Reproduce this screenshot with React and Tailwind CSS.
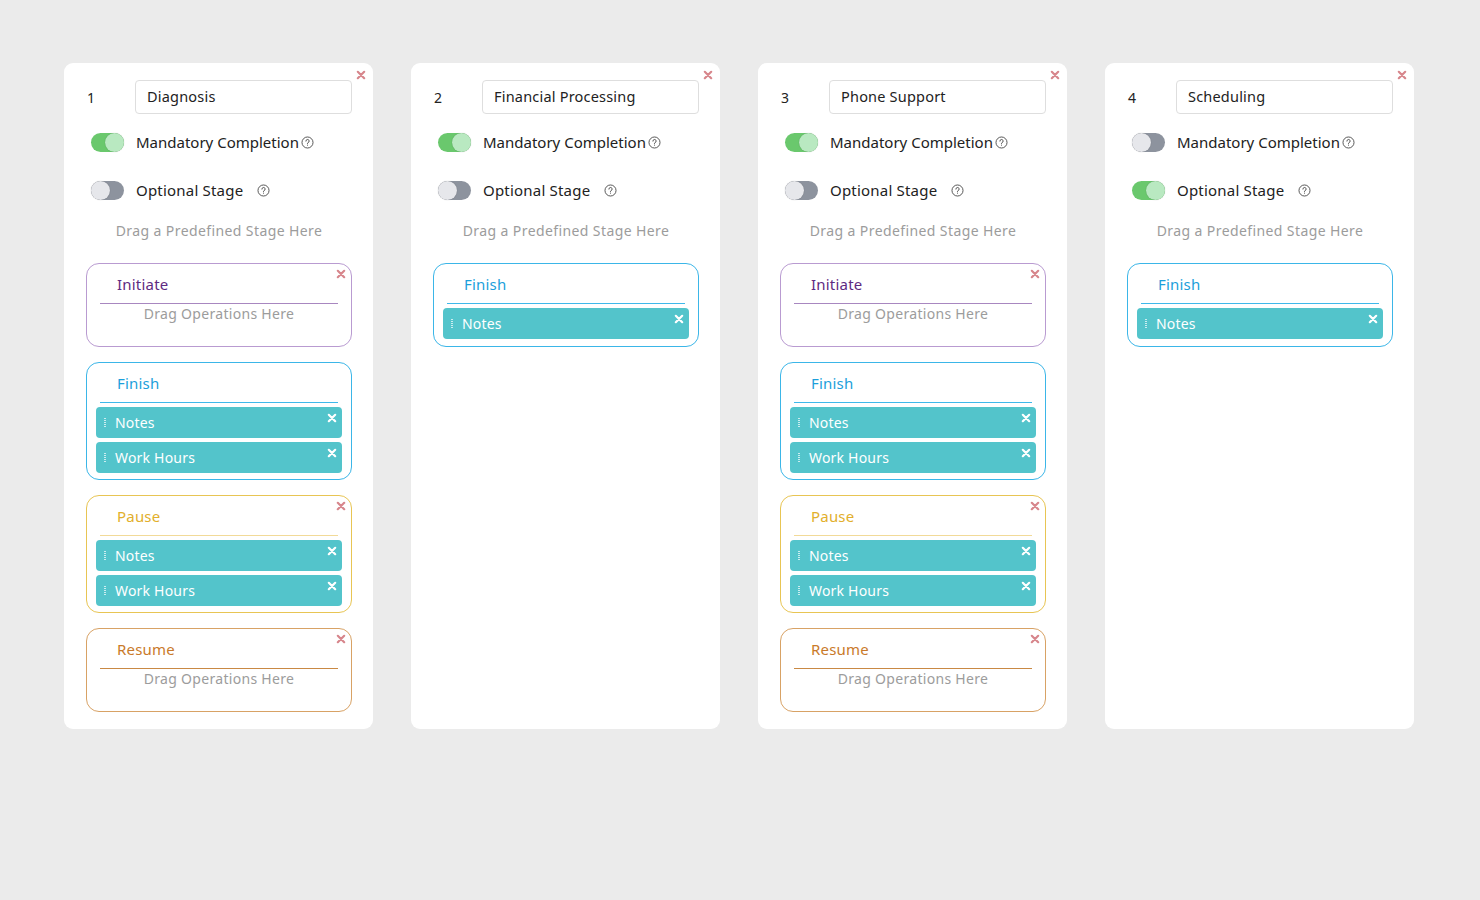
import { useState } from "react";

const STAGE_STYLES = {
  Initiate: { box: "border-[#b99bd1]", title: "text-[#5e2a82]", line: "bg-[#a887c0]" },
  Finish: { box: "border-[#3bb6e8]", title: "text-[#1c9fdb]", line: "bg-[#3fb8ea]" },
  Pause: { box: "border-[#e8c553]", title: "text-[#e2af2c]", line: "bg-[#f2da98]" },
  Resume: { box: "border-[#d8a265]", title: "text-[#c97a2a]", line: "bg-[#c98944]" }
};

const columns = [
  {
    id: 1,
    name: "Diagnosis",
    mandatory: true,
    optional: false,
    stages: [
      { name: "Initiate", ops: [], closable: true },
      { name: "Finish", ops: ["Notes", "Work Hours"] },
      { name: "Pause", ops: ["Notes", "Work Hours"], closable: true },
      { name: "Resume", ops: [], closable: true }
    ]
  },
  {
    id: 2,
    name: "Financial Processing",
    mandatory: true,
    optional: false,
    stages: [{ name: "Finish", ops: ["Notes"] }]
  },
  {
    id: 3,
    name: "Phone Support",
    mandatory: true,
    optional: false,
    stages: [
      { name: "Initiate", ops: [], closable: true },
      { name: "Finish", ops: ["Notes", "Work Hours"] },
      { name: "Pause", ops: ["Notes", "Work Hours"], closable: true },
      { name: "Resume", ops: [], closable: true }
    ]
  },
  {
    id: 4,
    name: "Scheduling",
    mandatory: false,
    optional: true,
    stages: [{ name: "Finish", ops: ["Notes"] }]
  }
];

function CloseX({ className }) {
  return (
    <svg viewBox="0 0 10 10" className={className} fill="none" stroke="currentColor" strokeWidth="2.2" strokeLinecap="round">
      <path d="M1.8 1.8 L8.2 8.2 M8.2 1.8 L1.8 8.2" />
    </svg>
  );
}

function HelpIcon() {
  return (
    <svg viewBox="0 0 16 16" className="h-[13px] w-[13px] text-[#444]" fill="none" stroke="currentColor" strokeWidth="1.1">
      <circle cx="8" cy="8" r="6.8" />
      <path d="M6 6.3a2 2 0 1 1 2.6 1.9c-.4.2-.6.5-.6.9v.7" strokeLinecap="round" />
      <circle cx="8" cy="11.6" r="0.6" fill="currentColor" stroke="none" />
    </svg>
  );
}

function Toggle({ on }) {
  return (
    <div className={`relative h-[19px] w-[33px] rounded-full ${on ? "bg-[#6ac86d]" : "bg-[#8d939e]"}`}>
      <div
        className={`absolute top-0 h-[19px] w-[19px] rounded-full shadow-[0_0_1px_rgba(0,0,0,0.3)] ${on ? "right-0 bg-[#b9e9c1]" : "left-0 bg-[#e6e7eb]"}`}
      />
    </div>
  );
}

function Operation({ label }) {
  return (
    <div className="relative flex h-[31px] items-center rounded-[4px] bg-[#53c4cb] pl-[8px] text-white">
      <span className="mr-[9px] flex flex-col gap-[1px]">
        {[0, 1, 2, 3, 4].map((i) => (
          <span key={i} className="block h-[1px] w-[2px] bg-white/70" />
        ))}
      </span>
      <span className="text-[14px] tracking-[0.2px]">{label}</span>
      <CloseX className="absolute right-[5px] top-[6px] h-[10px] w-[10px] text-white" />
    </div>
  );
}

function StageBox({ stage }) {
  const s = STAGE_STYLES[stage.name];
  return (
    <div className={`relative min-h-[84px] rounded-[13px] border ${s.box} bg-white`}>
      {stage.closable ? (
        <CloseX className="absolute right-[5px] top-[5px] h-[10px] w-[10px] text-[#d7868c]" />
      ) : null}
      <div className={`h-[39px] pl-[30px] pt-[9px] text-[15px] tracking-[0.2px] ${s.title}`}>{stage.name}</div>
      <div className={`mx-[13px] h-[1px] ${s.line}`} />
      {stage.ops.length ? (
        <div className="flex flex-col gap-[4px] px-[9px] pb-[6px] pt-[4px]">
          {stage.ops.map((op) => (
            <Operation key={op} label={op} />
          ))}
        </div>
      ) : (
        <div className="h-[42px] text-center text-[14px] leading-[20px] tracking-[0.3px] text-[#9c9c9c]">Drag Operations Here</div>
      )}
    </div>
  );
}

function Column({ col }) {
  const [name, setName] = useState(col.name);
  return (
    <div className="relative w-[309px] rounded-[9px] bg-white pb-[17px] pl-[22px] pr-[21px] pt-[17px]">
      <CloseX className="absolute right-[7px] top-[7px] h-[10px] w-[10px] text-[#d7868c]" />
      <div className="flex items-center">
        <div className="w-[49px] shrink-0 pl-[1px] text-[14px] text-[#222]">{col.id}</div>
        <input
          className="h-[34px] w-[217px] rounded-[4px] border border-[#dedede] px-[11px] pb-[2px] text-[14.5px] tracking-[0.2px] text-[#222] outline-none"
          value={name}
          onChange={(e) => setName(e.target.value)}
        />
      </div>
      <div className="mt-[18px] flex h-[20px] items-center pl-[5px]">
        <Toggle on={col.mandatory} />
        <span className="ml-[12px] text-[15px] tracking-[0px] text-[#222]">Mandatory Completion</span>
        <span className="ml-[2px] flex items-center">
          <HelpIcon />
        </span>
      </div>
      <div className="mt-[28px] flex h-[20px] items-center pl-[5px]">
        <Toggle on={col.optional} />
        <span className="ml-[12px] text-[15px] tracking-[0.2px] text-[#222]">Optional Stage</span>
        <span className="ml-[14px] flex items-center">
          <HelpIcon />
        </span>
      </div>
      <div className="mt-[20px] text-center text-[14px] tracking-[0.4px] text-[#9c9c9c]">Drag a Predefined Stage Here</div>
      <div className="mt-[22px] flex flex-col gap-[15px]">
        {col.stages.map((st) => (
          <StageBox key={st.name} stage={st} />
        ))}
      </div>
    </div>
  );
}

export default function App() {
  return (
    <div
      className="min-h-[900px] w-full bg-[#ebebeb] pl-[64px] pt-[63px]"
      style={{ fontFamily: '"Noto Sans", "Open Sans", sans-serif' }}
    >
      <div className="flex items-stretch gap-[38px]">
        {columns.map((c) => (
          <Column key={c.id} col={c} />
        ))}
      </div>
    </div>
  );
}
